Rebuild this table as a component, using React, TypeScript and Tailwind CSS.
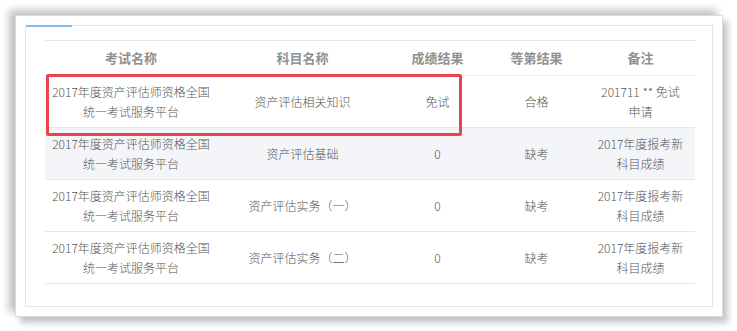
const rows = [
  {
    exam: ["2017年度资产评估师资格全国", "统一考试服务平台"],
    subject: "资产评估相关知识",
    score: "免试",
    grade: "合格",
    note: ["201711 ** 免试", "申请"],
  },
  {
    exam: ["2017年度资产评估师资格全国", "统一考试服务平台"],
    subject: "资产评估基础",
    score: "0",
    grade: "缺考",
    note: ["2017年度报考新", "科目成绩"],
  },
  {
    exam: ["2017年度资产评估师资格全国", "统一考试服务平台"],
    subject: "资产评估实务（一）",
    score: "0",
    grade: "缺考",
    note: ["2017年度报考新", "科目成绩"],
  },
  {
    exam: ["2017年度资产评估师资格全国", "统一考试服务平台"],
    subject: "资产评估实务（二）",
    score: "0",
    grade: "缺考",
    note: ["2017年度报考新", "科目成绩"],
  },
];

const cols = "grid grid-cols-[172px_171px_99px_99px_109px]";

export default function App() {
  return (
    <div
      className="w-[737px] h-[331px] bg-white pt-[15px] pl-[15px]"
      style={{ fontFamily: '"Noto Sans CJK SC", "Noto Sans", sans-serif' }}
    >
      {/* paper card */}
      <div className="w-[708px] h-[302px] bg-white border border-[#dcdcdc] p-[9px] shadow-[-6px_-5px_8px_rgba(0,0,0,0.25),5px_6px_6px_rgba(0,0,0,0.22)]">
        <div className="relative h-full border border-[#e4e4e4] pt-[14px] pl-[19px] pr-[17px]">
          <div className="absolute left-0 top-[-1px] w-[46px] h-[2px] bg-[#86bbee]" />

          <div className="relative border-t border-[#e6e6e6]">
            {/* header */}
            <div className={`${cols} h-[35px] items-center text-[13px] font-bold text-[#909090] border-b border-[#eeeeee]`}>
              <div className="text-center">考试名称</div>
              <div className="text-center">科目名称</div>
              <div className="text-center">成绩结果</div>
              <div className="text-center">等第结果</div>
              <div className="text-center">备注</div>
            </div>

            {rows.map((r, i) => (
              <div
                key={i}
                className={`${cols} h-[52px] items-center text-[12px] leading-[20px] font-light text-[#555] border-b border-[#e8e8e8] ${
                  i === 1 ? "bg-[#f4f5f9]" : "bg-white"
                }`}
              >
                <div className="text-center">
                  <div>{r.exam[0]}</div>
                  <div>{r.exam[1]}</div>
                </div>
                <div className="text-center">{r.subject}</div>
                <div className="text-center">{r.score}</div>
                <div className="text-center">{r.grade}</div>
                <div className="text-center">
                  <div className="whitespace-pre">{r.note[0]}</div>
                  <div>{r.note[1]}</div>
                </div>
              </div>
            ))}

            {/* highlight box */}
            <div className="absolute left-[1px] top-[33px] w-[416px] h-[62px] border-[3px] border-[#e8464c] rounded-[2px]" />
          </div>
        </div>
      </div>
    </div>
  );
}
